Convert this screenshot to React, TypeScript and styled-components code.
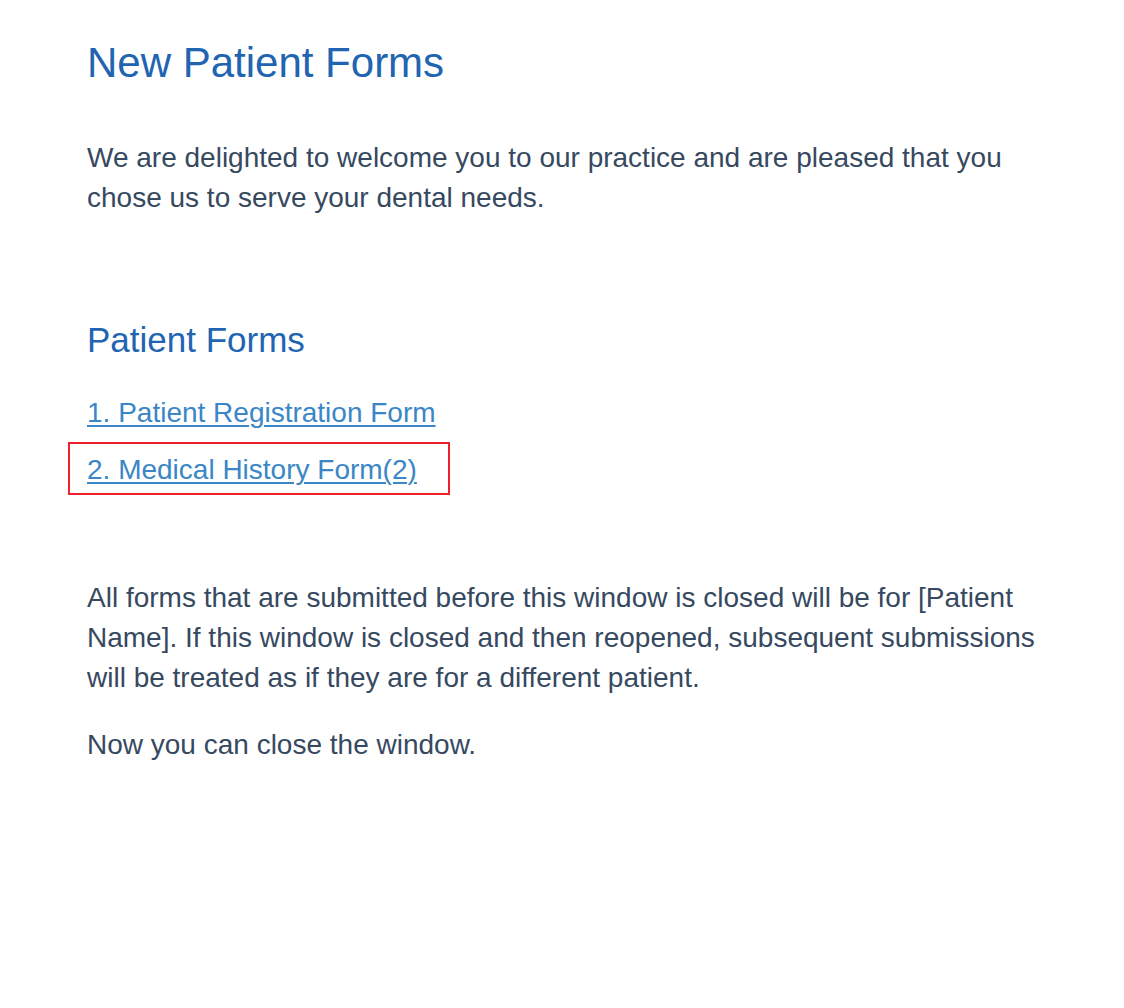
import React from "react";
import styled, { createGlobalStyle } from "styled-components";

const GlobalStyle = createGlobalStyle`
  html, body {
    margin: 0;
    padding: 0;
    background: #ffffff;
  }
  body {
    font-family: "Liberation Sans", Arial, sans-serif;
  }
`;

const Page = styled.main`
  box-sizing: border-box;
  width: 1124px;
  min-height: 1008px;
  padding: 40px 60px 0 87px;
  font-family: "Liberation Sans", Arial, sans-serif;
  color: #34495e;
`;

const Title = styled.h1`
  margin: 0;
  font-size: 42px;
  line-height: 46px;
  font-weight: 400;
  color: #2164b1;
`;

const Paragraph = styled.p<{ $gap: number }>`
  margin: ${(p) => p.$gap}px 0 0;
  font-size: 28px;
  line-height: 40px;
  color: #36495f;
  max-width: 975px;
`;

const SectionTitle = styled.h2`
  margin: 102px 0 0;
  font-size: 35px;
  line-height: 40px;
  font-weight: 400;
  color: #2164b1;
`;

const FormList = styled.ul`
  list-style: none;
  margin: 33px 0 0;
  padding: 0;
  display: flex;
  flex-direction: column;
  gap: 17px;
`;

const FormItem = styled.li<{ $highlight?: boolean }>`
  position: relative;
  align-self: flex-start;
  font-size: 28px;
  line-height: 40px;

  ${(p) =>
    p.$highlight &&
    `
    &::after {
      content: "";
      position: absolute;
      left: -19px;
      right: -33px;
      top: -8px;
      bottom: -5px;
      border: 2px solid #f0202a;
      pointer-events: none;
    }
  `}
`;

const FormLink = styled.a`
  color: #3a86c6;
  text-decoration: underline;
  text-decoration-thickness: 2px;
  text-underline-offset: 3px;
  cursor: pointer;
`;

const forms = [
  { label: "1. Patient Registration Form" },
  { label: "2. Medical History Form(2)", highlight: true },
];

export default function App() {
  return (
    <>
      <GlobalStyle />
      <Page>
        <Title>New Patient Forms</Title>
        <Paragraph $gap={52}>
          We are delighted to welcome you to our practice and are pleased that you chose us to
          serve your dental needs.
        </Paragraph>
        <SectionTitle>Patient Forms</SectionTitle>
        <FormList>
          {forms.map((f) => (
            <FormItem key={f.label} $highlight={f.highlight}>
              <FormLink href="#">{f.label}</FormLink>
            </FormItem>
          ))}
        </FormList>
        <Paragraph $gap={88}>
          All forms that are submitted before this window is closed will be for [Patient Name].
          If this window is closed and then reopened, subsequent submissions will be treated as
          if they are for a different patient.
        </Paragraph>
        <Paragraph $gap={27}>Now you can close the window.</Paragraph>
      </Page>
    </>
  );
}
